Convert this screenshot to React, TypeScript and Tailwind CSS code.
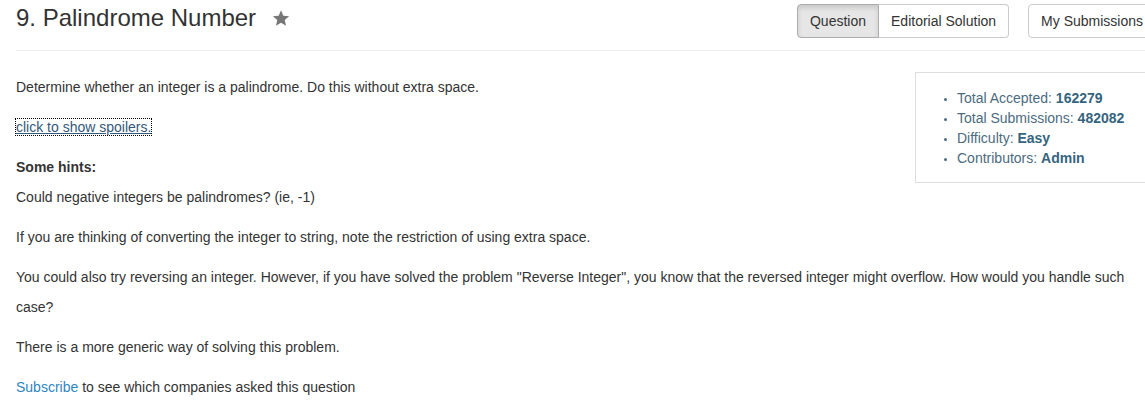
const StarIcon = () => (
  <svg width="18" height="18" viewBox="0 0 24 24" className="fill-[#777]">
    <path d="M12 1.8l3.1 7.1 7.7.7-5.8 5.1 1.7 7.6L12 18.3l-6.7 4 1.7-7.6L1.2 9.6l7.7-.7z" />
  </svg>
);

const App = () => {
  return (
    <div className="w-[1145px] h-[409px] overflow-hidden bg-white font-['Liberation_Sans',Arial,sans-serif] text-[#333]">
      <div className="pl-4">
        <div className="w-[1140px]">
          {/* Header */}
          <div className="flex items-start border-b border-[#eee] h-[51px]">
            <h3 className="flex items-center gap-4 text-[24px] leading-[26px] mt-[5px]">
              9. Palindrome Number
              <StarIcon />
            </h3>
            <div className="ml-auto flex mt-[4px] text-[14px] leading-[20px]">
              <div className="flex">
                <button className="h-[34px] px-3 border border-[#adadad] rounded-l bg-[#e6e6e6] shadow-[inset_0_3px_5px_rgba(0,0,0,0.125)]">
                  Question
                </button>
                <button className="h-[34px] px-3 border border-l-0 border-[#ccc] rounded-r bg-white">
                  Editorial Solution
                </button>
              </div>
              <button className="ml-[19px] h-[34px] px-3 border border-[#ccc] rounded bg-white whitespace-nowrap">
                My Submissions
              </button>
            </div>
          </div>

          {/* Body */}
          <div className="mt-[21px] text-[14px] leading-[30px]">
            <div className="float-right w-[241px] border border-[#ddd] bg-white pt-[15px] pb-[14px] ml-4 mb-4">
              <ul className="list-disc pl-[41px] text-[14px] leading-[20px] text-[#4b6b80] marker:text-[10px]">
                <li>
                  Total Accepted: <b className="text-[#35647e]">162279</b>
                </li>
                <li>
                  Total Submissions: <b className="text-[#35647e]">482082</b>
                </li>
                <li>
                  Difficulty: <b className="text-[#35647e]">Easy</b>
                </li>
                <li>
                  Contributors: <b className="text-[#35647e]">Admin</b>
                </li>
              </ul>
            </div>
            <p className="mb-[10px]">
              Determine whether an integer is a palindrome. Do this without extra space.
            </p>
            <p className="mb-[10px]">
              <a className="text-[#34587a] underline outline outline-1 outline-dotted outline-black" href="#">
                click to show spoilers.
              </a>
            </p>
            <p className="mb-[10px]">
              <b>Some hints:</b>
              <br />
              Could negative integers be palindromes? (ie, -1)
            </p>
            <p className="mb-[10px]">
              If you are thinking of converting the integer to string, note the restriction of using extra space.
            </p>
            <p className="mb-[10px]">
              You could also try reversing an integer. However, if you have solved the problem "Reverse Integer", you know that the reversed integer might overflow. How would you handle such case?
            </p>
            <p className="mb-[10px]">There is a more generic way of solving this problem.</p>
            <p>
              <a className="text-[#2e86c1]" href="#">
                Subscribe
              </a>{" "}
              to see which companies asked this question
            </p>
          </div>
        </div>
      </div>
    </div>
  );
};

export default App;
